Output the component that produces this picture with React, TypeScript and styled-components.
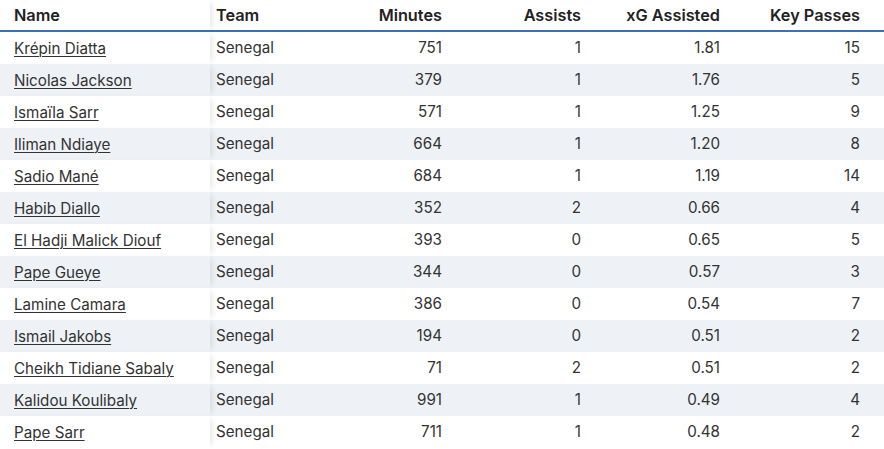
import React from "react";
import styled, { createGlobalStyle } from "styled-components";

const Global = createGlobalStyle`
  html, body { margin: 0; padding: 0; background: #ffffff; }
  body { font-family: Inter, "Noto Sans", sans-serif; color: #333; }
`;

type Row = { name: string; team: string; minutes: number; assists: number; xg: string; kp: number };

const rows: Row[] = [
  { name: "Krépin Diatta", team: "Senegal", minutes: 751, assists: 1, xg: "1.81", kp: 15 },
  { name: "Nicolas Jackson", team: "Senegal", minutes: 379, assists: 1, xg: "1.76", kp: 5 },
  { name: "Ismaïla Sarr", team: "Senegal", minutes: 571, assists: 1, xg: "1.25", kp: 9 },
  { name: "Iliman Ndiaye", team: "Senegal", minutes: 664, assists: 1, xg: "1.20", kp: 8 },
  { name: "Sadio Mané", team: "Senegal", minutes: 684, assists: 1, xg: "1.19", kp: 14 },
  { name: "Habib Diallo", team: "Senegal", minutes: 352, assists: 2, xg: "0.66", kp: 4 },
  { name: "El Hadji Malick Diouf", team: "Senegal", minutes: 393, assists: 0, xg: "0.65", kp: 5 },
  { name: "Pape Gueye", team: "Senegal", minutes: 344, assists: 0, xg: "0.57", kp: 3 },
  { name: "Lamine Camara", team: "Senegal", minutes: 386, assists: 0, xg: "0.54", kp: 7 },
  { name: "Ismail Jakobs", team: "Senegal", minutes: 194, assists: 0, xg: "0.51", kp: 2 },
  { name: "Cheikh Tidiane Sabaly", team: "Senegal", minutes: 71, assists: 2, xg: "0.51", kp: 2 },
  { name: "Kalidou Koulibaly", team: "Senegal", minutes: 991, assists: 1, xg: "0.49", kp: 4 },
  { name: "Pape Sarr", team: "Senegal", minutes: 711, assists: 1, xg: "0.48", kp: 2 },
];

const Wrap = styled.div`
  width: 884px;
  overflow: hidden;
`;

const Table = styled.table`
  border-collapse: separate;
  border-spacing: 0;
  table-layout: fixed;
  width: 884px;
  font-size: 15.2px;
`;

const HeadCell = styled.th<{ $align?: "left" | "right"; $sticky?: boolean }>`
  height: 30px;
  padding: 0 8px;
  text-align: ${(p) => p.$align || "right"};
  font-weight: 600;
  font-size: 16.3px;
  color: #222;
  background: #fff;
  border-bottom: 2px solid #3f70b0;
  white-space: nowrap;
  position: ${(p) => (p.$sticky ? "sticky" : "static")};
  left: 0;
  box-shadow: ${(p) => (p.$sticky ? "5px 0 6px -3px rgba(0,0,0,0.10)" : "none")};
  z-index: ${(p) => (p.$sticky ? 2 : 0)};
`;

const BodyRow = styled.tr<{ $striped: boolean }>`
  background: ${(p) => (p.$striped ? "#eef2f6" : "#ffffff")};
`;

const Cell = styled.td<{ $align?: "left" | "right" }>`
  height: 32px;
  padding: 0 8px;
  text-align: ${(p) => p.$align || "right"};
  white-space: nowrap;
  color: #333;
  line-height: 1;
`;

const NameCell = styled.td<{ $striped: boolean }>`
  height: 32px;
  padding: 0 8px 0 14px;
  text-align: left;
  white-space: nowrap;
  position: sticky;
  left: 0;
  background: ${(p) => (p.$striped ? "#eef2f6" : "#ffffff")};
  box-shadow: 5px 0 6px -3px rgba(0,0,0,0.10);
  z-index: 1;
`;

const NameLink = styled.a`
  color: #333;
  text-decoration: underline;
  text-underline-offset: 2px;
  text-decoration-thickness: 1px;
`;

const TeamCell = styled(Cell)`
  padding-left: 6px;
`;

export default function App() {
  return (
    <Wrap>
      <Global />
      <Table>
        <colgroup>
          <col style={{ width: 210 }} />
          <col style={{ width: 100 }} />
          <col style={{ width: 140 }} />
          <col style={{ width: 139 }} />
          <col style={{ width: 139 }} />
          <col style={{ width: 140 }} />
          <col />
        </colgroup>
        <thead>
          <tr>
            <HeadCell $align="left" $sticky style={{ paddingLeft: 14 }}>Name</HeadCell>
            <HeadCell $align="left" style={{ paddingLeft: 6 }}>Team</HeadCell>
            <HeadCell>Minutes</HeadCell>
            <HeadCell>Assists</HeadCell>
            <HeadCell>xG Assisted</HeadCell>
            <HeadCell>Key Passes</HeadCell>
            <HeadCell />
          </tr>
        </thead>
        <tbody>
          {rows.map((r, i) => (
            <BodyRow key={r.name} $striped={i % 2 === 1}>
              <NameCell $striped={i % 2 === 1}>
                <NameLink href="#">{r.name}</NameLink>
              </NameCell>
              <TeamCell $align="left">{r.team}</TeamCell>
              <Cell>{r.minutes}</Cell>
              <Cell>{r.assists}</Cell>
              <Cell>{r.xg}</Cell>
              <Cell>{r.kp}</Cell>
              <Cell />
            </BodyRow>
          ))}
        </tbody>
      </Table>
    </Wrap>
  );
}
